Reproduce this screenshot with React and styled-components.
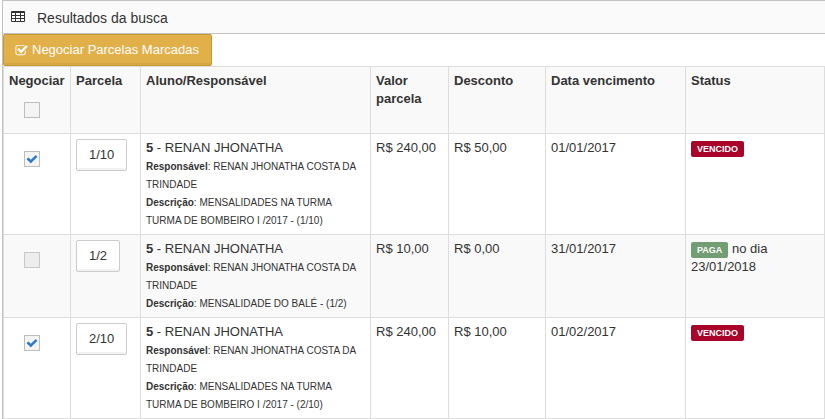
import React, { useState } from 'react';
import styled, { createGlobalStyle } from 'styled-components'

const GlobalStyle = createGlobalStyle`
    * {
        box-sizing: border-box;
    }
    body {
        margin: 0;
        background: #fff;
        color: #333;
        font-family: "Liberation Sans", Arial, sans-serif;
        font-size: 13px;
        line-height: 18px;
    }
`

const Panel = styled.section`
    margin-left: 2px;
    border-top: 1px solid #c2c2c2;
    border-left: 1px solid #c2c2c2;
`

const PanelHeader = styled.header`
    display: flex;
    align-items: center;
    gap: 12px;
    height: 33px;
    padding: 0 8px;
    background: #fafafa;
    border-bottom: 1px solid #c2c2c2;
    h1 {
        margin: 0;
        padding-top: 2px;
        font-size: 14px;
        font-weight: normal;
    }
`

const NegotiateButton = styled.button`
    display: flex;
    align-items: center;
    gap: 4px;
    height: 32px;
    padding: 0 12px 0 11px;
    border: 1px solid #c79932;
    border-radius: 2px;
    background: #e2b049;
    box-shadow: inset 0 -2px 0 rgba(0, 0, 0, 0.05);
    color: #fff;
    font: inherit;
    cursor: pointer;
`

const Table = styled.table`
    width: 100%;
    table-layout: fixed;
    border-collapse: collapse;
    th, td {
        padding: 5px;
        border: 1px solid #ddd;
        text-align: left;
        vertical-align: top;
    }
    th {
        background: #f9f9f9;
    }
    tbody tr:nth-child(even) {
        background: #f9f9f9;
    }
`

const Col = styled.col`
    width: ${props => props.$width ? `${props.$width}px` : 'auto'};
`

const CheckLabel = styled.label`
    display: block;
    position: relative;
    width: 16px;
    height: 16px;
    margin: 12px 0 10px 15px;
    input {
        display: block;
        appearance: none;
        width: 16px;
        height: 16px;
        margin: 0;
        border: 1px solid #bdbdbd;
        background: #f4f4f4;
    }
    input:disabled {
        border-color: #c8c8c8;
        background: #ededed;
    }
    svg {
        position: absolute;
        top: 2px;
        left: 2px;
        fill: #2e7bcc;
        pointer-events: none;
    }
`

const ParcelButton = styled.button`
    display: block;
    height: 32px;
    padding: 0 12px;
    border: 1px solid #ccc;
    border-radius: 2px;
    background: #fff;
    box-shadow: inset 0 -2px 0 rgba(0, 0, 0, 0.05);
    color: #333;
    font: inherit;
    cursor: pointer;
`

const Detail = styled.small`
    font-size: 10px;
    line-height: 10px;
`

const Badge = styled.span`
    display: inline-block;
    padding: 0 6px;
    border-radius: 2px;
    background: ${props => props.$paid ? '#739e73' : '#a90329'};
    color: #fff;
    font-size: 9px;
    font-weight: bold;
    line-height: 16px;
`

const parcelas = [
    {
        numero: '1/10',
        descricao: 'MENSALIDADES NA TURMA TURMA DE BOMBEIRO I /2017 - (1/10)',
        valor: 'R$ 240,00',
        desconto: 'R$ 50,00',
        vencimento: '01/01/2017'
    },
    {
        numero: '1/2',
        descricao: 'MENSALIDADE DO BALÉ - (1/2)',
        valor: 'R$ 10,00',
        desconto: 'R$ 0,00',
        vencimento: '31/01/2017',
        pagoEm: '23/01/2018'
    },
    {
        numero: '2/10',
        descricao: 'MENSALIDADES NA TURMA TURMA DE BOMBEIRO I /2017 - (2/10)',
        valor: 'R$ 240,00',
        desconto: 'R$ 10,00',
        vencimento: '01/02/2017'
    }
]

function TableIcon() {
    return (
        <svg width='14' height='12' viewBox='0 0 14 12' aria-hidden='true'>
            <rect width='14' height='11' rx='1' fill='#333' />
            <g fill='#fff'>
                {[2, 5, 8].map(y => (
                    <React.Fragment key={y}>
                        <rect x='1' y={y} width='3' height='2' />
                        <rect x='5' y={y} width='4' height='2' />
                        <rect x='10' y={y} width='3' height='2' />
                    </React.Fragment>
                ))}
            </g>
        </svg>
    )
}

function CheckSquareIcon() {
    return (
        <svg width='13' height='13' viewBox='0 0 1792 1792' fill='#fff' aria-hidden='true'>
            <path d='M1472 930v318q0 119-84.5 203.5t-203.5 84.5h-832q-119 0-203.5-84.5t-84.5-203.5v-832q0-119 84.5-203.5t203.5-84.5h832q63 0 117 25 15 7 18 23 3 17-9 29l-49 49q-10 10-23 10-3 0-9-2-23-6-45-6h-832q-66 0-113 47t-47 113v832q0 66 47 113t113 47h832q66 0 113-47t47-113v-254q0-13 9-22l64-64q10-10 23-10 6 0 12 3 20 8 20 29zm231-489l-814 814q-24 24-57 24t-57-24l-430-430q-24-24-24-57t24-57l110-110q24-24 57-24t57 24l263 263 647-647q24-24 57-24t57 24l110 110q24 24 24 57t-24 57z' />
        </svg>
    )
}

function Check({ label, checked, disabled, onChange }) {
    return (
        <CheckLabel>
            <input
            type='checkbox'
            aria-label={label}
            checked={checked}
            disabled={disabled}
            onChange={onChange}
            />
            {checked && (
                <svg width='12' height='12' viewBox='0 0 1792 1792' aria-hidden='true'>
                    <path d='M1671 566q0 40-28 68l-724 724-136 136q-28 28-68 28t-68-28l-136-136-362-362q-28-28-28-68t28-68l136-136q28-28 68-28t68 28l294 295 656-657q28-28 68-28t68 28l136 136q28 28 28 68z' />
                </svg>
            )}
        </CheckLabel>
    )
}

export default function App() {
    const [marcadas, setMarcadas] = useState(['1/10', '2/10'])
    const [todas, setTodas] = useState(false)

    const onToggle = numero => {
        setMarcadas(marcadas.includes(numero)
            ? marcadas.filter(m => m !== numero)
            : [...marcadas, numero])
    }

    const onToggleAll = () => {
        setMarcadas(todas ? [] : parcelas.filter(p => !p.pagoEm).map(p => p.numero))
        setTodas(!todas)
    }

    return (
        <>
            <GlobalStyle />
            <Panel>
                <PanelHeader>
                    <TableIcon />
                    <h1>Resultados da busca</h1>
                </PanelHeader>
                <NegotiateButton type='button'>
                    <CheckSquareIcon />
                    Negociar Parcelas Marcadas
                </NegotiateButton>
                <Table>
                    <colgroup>
                        <Col $width={67} />
                        <Col $width={70} />
                        <Col />
                        <Col $width={78} />
                        <Col $width={97} />
                        <Col $width={140} />
                        <Col $width={139} />
                    </colgroup>
                    <thead>
                        <tr>
                            <th>
                                Negociar
                                <Check label='Marcar todas' checked={todas} onChange={onToggleAll} />
                            </th>
                            <th>Parcela</th>
                            <th>Aluno/Responsável</th>
                            <th>Valor parcela</th>
                            <th>Desconto</th>
                            <th>Data vencimento</th>
                            <th>Status</th>
                        </tr>
                    </thead>
                    <tbody>
                        {parcelas.map(p => (
                            <tr key={p.numero}>
                                <td>
                                    <Check
                                    label={`Negociar ${p.numero}`}
                                    checked={marcadas.includes(p.numero)}
                                    disabled={Boolean(p.pagoEm)}
                                    onChange={() => onToggle(p.numero)}
                                    />
                                </td>
                                <td><ParcelButton type='button'>{p.numero}</ParcelButton></td>
                                <td>
                                    <b>5</b> - RENAN JHONATHA
                                    <br />
                                    <Detail><b>Responsável</b>: RENAN JHONATHA COSTA DA TRINDADE</Detail>
                                    <br />
                                    <Detail><b>Descrição</b>: {p.descricao}</Detail>
                                </td>
                                <td>{p.valor}</td>
                                <td>{p.desconto}</td>
                                <td>{p.vencimento}</td>
                                <td>
                                    {p.pagoEm
                                        ? <><Badge $paid>PAGA</Badge> no dia {p.pagoEm}</>
                                        : <Badge>VENCIDO</Badge>}
                                </td>
                            </tr>
                        ))}
                    </tbody>
                </Table>
            </Panel>
        </>
    )
}
